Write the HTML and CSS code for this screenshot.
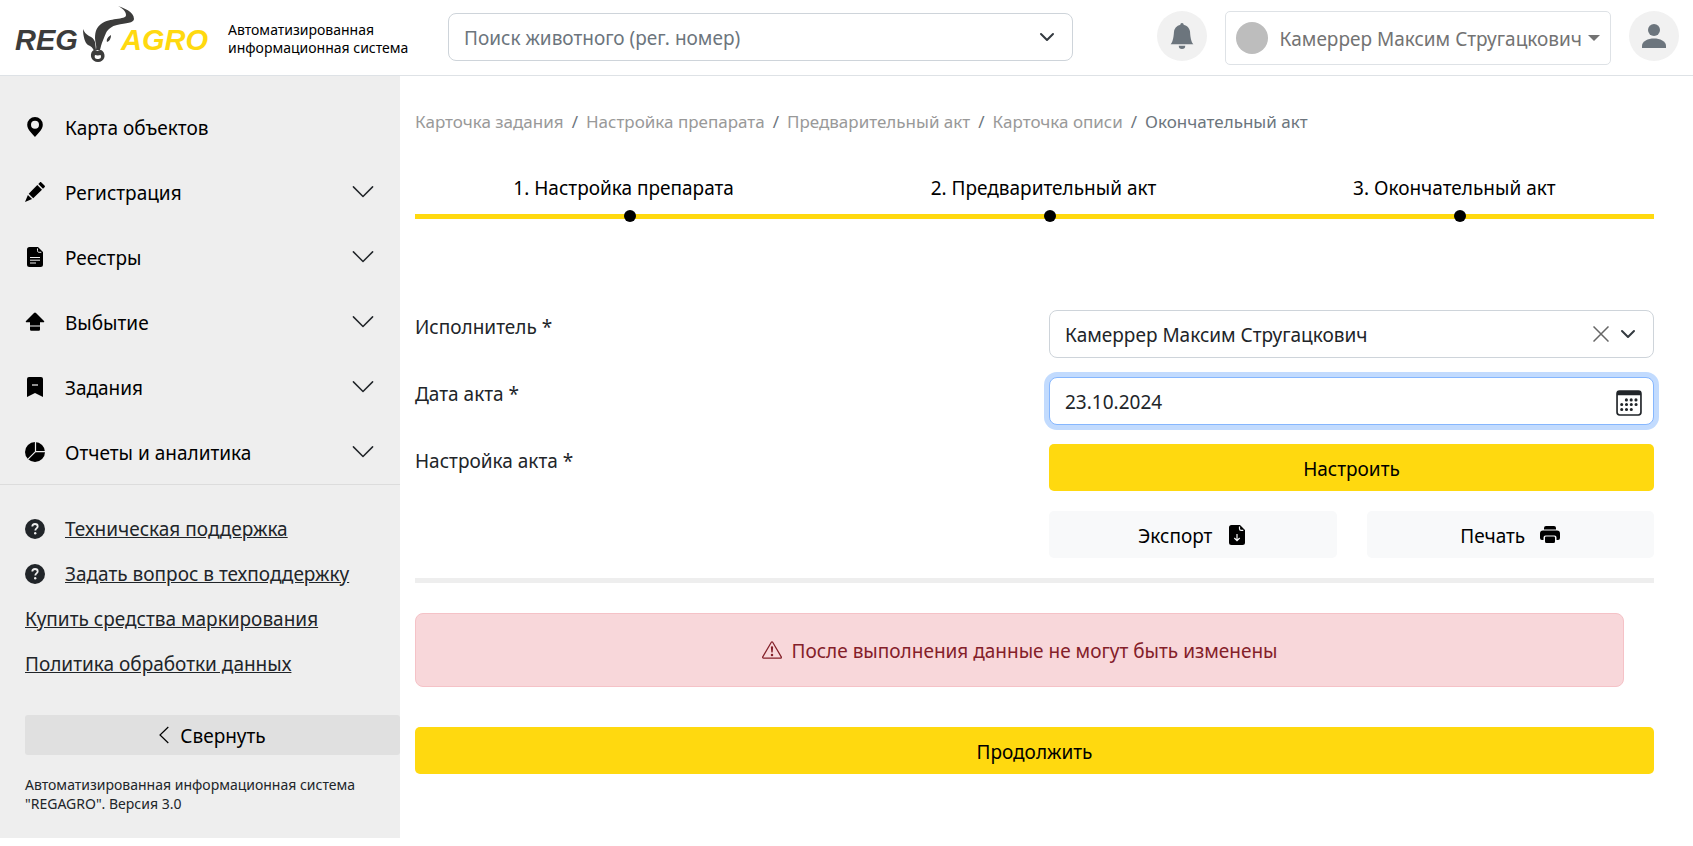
FILE: index.html
```html
<!DOCTYPE html>
<html lang="ru">
<head>
<meta charset="utf-8">
<title>REGAGRO</title>
<link rel="stylesheet" href="styles.css">
</head>
<body>
<svg class="sprite" aria-hidden="true">
  <symbol id="chevron" viewBox="0 0 16 16"><path d="M1.6 4.6 8 11l6.400-6.400" fill="none" stroke="currentColor" stroke-width="1" stroke-linecap="round" stroke-linejoin="round"/></symbol>
  <symbol id="chevron-bold" viewBox="0 0 16 16"><path d="m2 5 6 6 6-6" fill="none" stroke="#343a40" stroke-width="2" stroke-linecap="round" stroke-linejoin="round"/></symbol>
  <symbol id="question" viewBox="0 0 20 20"><circle cx="10" cy="10" r="10" fill="currentColor"/><path d="M7.300 7.600c0-1.700 1.200-2.600 2.700-2.600s2.700.9 2.700 2.400c0 2-2.400 2-2.400 4.100" fill="none" stroke="#eee" stroke-width="1.800"/><circle cx="10.200" cy="14.300" r="1.200" fill="#eee"/></symbol>
</svg>

<header class="header">
  <a class="brand" href="#" aria-label="REGAGRO">
    <svg class="logo" viewBox="0 0 196 70">
      <text class="logo-text" x="0" y="50" fill="#3c3c3b">REG</text>
      <text class="logo-text" x="106" y="50" fill="#ffd90f">AGRO</text>
      <g transform="translate(-15 0)" fill="#3c3c3b">
        <path d="M118 6c5 2 16 5 16 13 0 4-8 4-17 6-5 1-9 4-11 8-2 5-4 9-5 13l-1 4h-4c1-4-1-8-1-12 0-7 2-11 6-14 5-4 10-4 15-5 6-1 10-1 10-4 0-4-4-7-8-9z"/>
        <path d="M83 29c1 3 3 5 6 7 3 1 5 3 6 6l1 8-2 1c-1-3-3-5-6-6-3-2-5-9-5-16z"/>
        <path d="M111 35c0 3-1 6-4 7-1-3 1-5 4-7z"/>
        <path d="M92.500 51c1-1.500 3-1.500 5 0 2-1.500 4-1.500 5 0 4 4 2 11-4.500 11s-9-7-5.500-11zm2.500 4c-1 3 .5 4 2.800 4s4-1 2.800-4l-2.800.5z" fill-rule="evenodd"/>
      </g>
    </svg>
    <span class="tagline">Автоматизированная<br>информационная система</span>
  </a>
  <div class="field search">
    <select class="control control-muted" aria-label="Поиск животного"><option>Поиск животного (рег. номер)</option></select>
    <svg class="field-chevron"><use href="#chevron-bold"/></svg>
  </div>
  <div class="account">
    <button class="round" aria-label="Уведомления"><svg viewBox="0 0 16 16" width="26" height="26" fill="currentColor"><path d="M8 16a2 2 0 0 0 2-2H6a2 2 0 0 0 2 2m.995-14.901a1 1 0 1 0-1.990 0A5 5 0 0 0 3 6c0 1.098-.5 6-2 7h14c-1.500-1-2-5.902-2-7 0-2.420-1.720-4.440-4.005-4.901"/></svg></button>
    <button class="user"><span class="avatar"></span><span class="label">Камеррер Максим Стругацкович</span><span class="caret"></span></button>
    <button class="round" aria-label="Профиль"><svg viewBox="0 0 24 24" width="24" height="24" fill="currentColor"><circle cx="12" cy="6" r="6"/><path d="M0 24v-2c0-5 6-7.500 12-7.500S24 17 24 22v2z"/></svg></button>
  </div>
</header>

<div class="layout">
  <aside class="sidebar">
    <nav class="nav">
      <a class="nav-item" href="#"><svg class="icon" viewBox="0 0 20 20"><path fill-rule="evenodd" d="M10 0a7.800 7.800 0 0 1 7.800 7.800C17.800 13 12 17.500 10 20 8 17.500 2.200 13 2.200 7.800A7.800 7.800 0 0 1 10 0zm0 3.800a4 4 0 1 0 0 8 4 4 0 0 0 0-8z"/></svg><span class="label">Карта объектов</span></a>
      <a class="nav-item" href="#"><svg class="icon" viewBox="0 0 20 20"><path d="M14.800.5c.5-.6 1-.6 1.600 0l3.100 3.100c.6.6.6 1.100 0 1.600L18 6.700 13.300 2zM12.300 3 17 7.700 8.200 16.200 3.700 11.800zM2.900 13l4.200 4.100L0 20z"/></svg><span class="label">Регистрация</span><svg class="nav-chevron"><use href="#chevron"/></svg></a>
      <a class="nav-item" href="#"><svg class="icon" viewBox="0 0 20 20"><path d="M4.500 0H13l5 5v12.500a2.500 2.500 0 0 1-2.500 2.500h-11A2.500 2.500 0 0 1 2 17.500v-15A2.500 2.500 0 0 1 4.500 0z"/><path d="M12.500 1.500v2.200c0 1 .5 1.600 1.600 1.600h2.200M5 10.500h10M5 13.200h10M5 16h6" fill="none" stroke="#eee" stroke-width="1"/></svg><span class="label">Реестры</span><svg class="nav-chevron"><use href="#chevron"/></svg></a>
      <a class="nav-item" href="#"><svg class="icon" viewBox="0 0 20 20"><path d="M9 .9c.7-.7 1.300-.7 2 0l8 8c.5.6.2 1.300-.6 1.300H15v3.200H5v-3.200H1.600c-.8 0-1.100-.7-.6-1.300zM5 14.600h10v3a1.200 1.200 0 0 1-1.200 1.200H6.200A1.200 1.200 0 0 1 5 17.600z"/></svg><span class="label">Выбытие</span><svg class="nav-chevron"><use href="#chevron"/></svg></a>
      <a class="nav-item" href="#"><svg class="icon" viewBox="0 0 20 20"><path d="M4 0h12a2 2 0 0 1 2 2v18l-8-4-8 4V2a2 2 0 0 1 2-2z"/><path d="M7 8h6" stroke="#eee" stroke-width="1.200"/></svg><span class="label">Задания</span><svg class="nav-chevron"><use href="#chevron"/></svg></a>
      <a class="nav-item" href="#"><svg class="icon" viewBox="0 0 20 20"><circle cx="10" cy="10" r="10"/><path d="M10.500 0v9.700H20M10.500 9.700 3 17.200" fill="none" stroke="#eee" stroke-width="1.200"/></svg><span class="label">Отчеты и аналитика</span><svg class="nav-chevron"><use href="#chevron"/></svg></a>
    </nav>
    <div class="links">
      <a class="link" href="#"><svg class="icon"><use href="#question"/></svg><span>Техническая поддержка</span></a>
      <a class="link" href="#"><svg class="icon"><use href="#question"/></svg><span>Задать вопрос в техподдержку</span></a>
      <a class="link" href="#"><span>Купить средства маркирования</span></a>
      <a class="link" href="#"><span>Политика обработки данных</span></a>
    </div>
    <button class="collapse"><svg viewBox="0 0 10 18" width="10" height="18"><path d="M9.300 1 1 9l8.300 8" fill="none" stroke="currentColor" stroke-width="1.200"/></svg><span class="label">Свернуть</span></button>
    <p class="version">Автоматизированная информационная система "REGAGRO". Версия 3.0</p>
  </aside>

  <main class="main">
    <nav class="breadcrumb">
      <a href="#">Карточка задания</a><a href="#">Настройка препарата</a><a href="#">Предварительный акт</a><a href="#">Карточка описи</a><span>Окончательный акт</span>
    </nav>
    <ol class="steps">
      <li>1. Настройка препарата</li>
      <li>2. Предварительный акт</li>
      <li>3. Окончательный акт</li>
    </ol>
    <form class="form">
      <label class="form-label" for="executor">Исполнитель *</label>
      <div class="field">
        <select class="control" id="executor"><option>Камеррер Максим Стругацкович</option></select>
        <button type="button" class="clear" aria-label="Очистить"><svg viewBox="0 0 16 16" width="16" height="16"><path d="m.5.5 15 15m0-15-15 15" stroke="currentColor" stroke-width="1.500"/></svg></button>
        <svg class="field-chevron"><use href="#chevron-bold"/></svg>
      </div>
      <label class="form-label" for="date">Дата акта *</label>
      <div class="field">
        <input class="control control-active" id="date" type="text" value="23.10.2024">
        <svg class="calendar" viewBox="0 0 25 25"><rect x="1" y="1" width="23" height="23" rx="2.500" fill="none" stroke="#212529" stroke-width="1.600"/><path d="M1 5V3a2 2 0 0 1 2-2h19a2 2 0 0 1 2 2v2z" fill="#212529"/><path d="M10 9.500h9.500M5.500 14h14M5.500 18.700h9.500" stroke="#212529" stroke-width="3" stroke-linecap="round" stroke-dasharray="0 4.600"/></svg>
      </div>
      <label class="form-label" for="setup">Настройка акта *</label>
      <button type="button" class="button" id="setup"><span class="label">Настроить</span></button>
      <div class="pair">
        <button type="button" class="button button-light"><span class="label">Экспорт</span><svg class="icon" viewBox="0 0 20 20"><path d="M4.500 0H13l5 5v12.500a2.500 2.500 0 0 1-2.500 2.500h-11A2.500 2.500 0 0 1 2 17.500v-15A2.500 2.500 0 0 1 4.500 0z"/><path d="M12.500 1.500v2.200c0 1 .5 1.600 1.600 1.600h2.200M10 9v6.500M7.300 13l2.700 2.700 2.700-2.700" fill="none" stroke="#f8f9fa" stroke-width="1.200"/></svg></button>
        <button type="button" class="button button-light"><span class="label">Печать</span><svg class="icon" viewBox="0 0 20 20"><path d="M6 1h8a2 2 0 0 1 2 2v1.500H4V3a2 2 0 0 1 2-2zM3 5.600h14a3 3 0 0 1 3 3V13a2 2 0 0 1-2 2h-1.500v-2.500a2 2 0 0 0-2-2h-9a2 2 0 0 0-2 2V15H2a2 2 0 0 1-2-2V8.600a3 3 0 0 1 3-3zM6.300 11.500h7.400c.8 0 1.300.5 1.300 1.300v3.700a1.500 1.500 0 0 1-1.500 1.500h-7A1.500 1.500 0 0 1 5 16.500v-3.700c0-.8.500-1.300 1.300-1.300z"/></svg></button>
      </div>
    </form>
    <hr class="rule">
    <div class="alert" role="alert"><svg viewBox="0 0 16 16" width="20" height="20" fill="currentColor"><path d="M7.938 2.016A.13.13 0 0 1 8.002 2a.13.13 0 0 1 .063.016.15.15 0 0 1 .054.057l6.857 11.667c.036.060.035.124.002.183a.2.2 0 0 1-.054.060.1.1 0 0 1-.066.017H1.146a.1.1 0 0 1-.066-.017.2.2 0 0 1-.054-.060.180.180 0 0 1 .002-.183L7.884 2.073a.15.15 0 0 1 .054-.057m1.044-.450a1.130 1.130 0 0 0-1.960 0L.165 13.233c-.457.778.091 1.767.980 1.767h13.713c.889 0 1.438-.990.980-1.767z"/><path d="M7.002 12a1 1 0 1 1 2 0 1 1 0 0 1-2 0M7.100 5.995a.905.905 0 1 1 1.800 0l-.350 3.507a.552.552 0 0 1-1.100 0z"/></svg><span class="label">После выполнения данные не могут быть изменены</span></div>
    <button class="button"><span class="label">Продолжить</span></button>
  </main>
</div>
</body>
</html>
```

FILE: styles.css
```css
* { box-sizing: border-box; }
body {
  margin: 0;
  background: #fff;
  color: #212529;
  font: 19px/30px "Noto Sans", "Open Sans", sans-serif;
}
button, input, select { font: inherit; color: inherit; margin: 0; }
button { cursor: pointer; }
svg { flex: none; }
.sprite { display: none; }
.icon { width: 20px; height: 20px; }
.label { padding-top: 2px; }

.header {
  display: flex;
  align-items: flex-start;
  height: 76px;
  padding-right: 14px;
  border-bottom: 1px solid #dee2e6;
}
.brand {
  display: flex;
  align-items: flex-start;
  gap: 17px;
  width: 448px;
  padding-left: 15px;
  color: #000;
  text-decoration: none;
}
.logo { width: 196px; height: 70px; }
.logo-text { font: italic bold 29px "Liberation Sans", Arial, sans-serif; }
.tagline { padding-top: 21px; font-size: 14px; line-height: 18px; white-space: nowrap; }
.search { flex: 1; max-width: 625px; margin-top: 13px; }
.account { display: flex; gap: 18px; margin: 11px 0 0 auto; }
.round {
  display: flex;
  align-items: center;
  justify-content: center;
  width: 50px;
  height: 50px;
  padding: 0;
  border: 0;
  border-radius: 50%;
  background: #f1f1f1;
  color: #6c757d;
}
.user {
  display: flex;
  align-items: center;
  gap: 12px;
  height: 54px;
  padding: 0 10px;
  border: 1px solid #dee2e6;
  border-radius: 5px;
  background: #fff;
  color: #737373;
  white-space: nowrap;
}
.avatar { width: 32px; height: 32px; border-radius: 50%; background: #bdbdbd; }
.caret { margin-left: -6px; border: 6px solid transparent; border-top-color: #737373; border-bottom: 0; }

.field { position: relative; }
.control {
  display: block;
  width: 100%;
  height: 48px;
  padding: 2px 15px 0;
  border: 1px solid #ced4da;
  border-radius: 8px;
  outline: 0;
  background: #fff;
  appearance: none;
}
.control-muted { color: #6c757d; }
.control-active { border-color: #86b7fe; box-shadow: 0 0 0 5px #c2dbfe; }
.field-chevron { position: absolute; top: 16px; right: 18px; width: 16px; height: 16px; pointer-events: none; }
.clear {
  position: absolute;
  top: 16px;
  right: 45px;
  display: flex;
  padding: 0;
  border: 0;
  background: none;
  color: #666;
}
.calendar { position: absolute; top: 13px; right: 12px; width: 26px; height: 26px; pointer-events: none; }

.layout { display: flex; align-items: flex-start; }
.sidebar { flex: none; width: 400px; padding-bottom: 25px; background: #eee; }
.nav { padding: 18px 25px 0; border-bottom: 1px solid #dcdcdc; }
.nav-item {
  display: flex;
  align-items: center;
  gap: 20px;
  height: 65px;
  color: #000;
  text-decoration: none;
}
.nav-chevron { width: 24px; height: 24px; margin-left: auto; color: #212529; }
.links { padding: 21px 25px 0; }
.link { display: flex; align-items: center; gap: 20px; height: 45px; color: #212529; }
.collapse {
  display: flex;
  align-items: center;
  justify-content: center;
  gap: 11px;
  width: 375px;
  height: 40px;
  margin: 29px 0 20px 25px;
  border: 0;
  border-radius: 3px;
  background: #e0e0e0;
  color: #000;
}
.version { margin: 0; padding: 0 25px; font-size: 14px; line-height: 19px; }

.main { flex: 1; min-width: 0; padding: 31px 39px 0 15px; }
.breadcrumb { display: flex; font-size: 17px; }
.breadcrumb a { color: #999; text-decoration: none; }
.breadcrumb a::after { content: "/"; margin: 0 8px; color: #6c757d; }
.breadcrumb span { color: #6c757d; }
.steps {
  display: flex;
  justify-content: space-around;
  margin: 36px 0 91px;
  padding: 0;
  border-bottom: 5px solid #ffd90f;
  color: #000;
  list-style: none;
}
.steps li { position: relative; height: 41px; }
.steps li::after {
  content: "";
  position: absolute;
  bottom: -8px;
  left: 50%;
  width: 12px;
  height: 12px;
  border-radius: 50%;
  background: #000;
}
.form { display: grid; grid-template-columns: 1fr 1fr; grid-auto-rows: 47px; gap: 20px 29px; }
.form-label { padding-top: 2px; }
.pair { grid-column: 2; display: grid; grid-template-columns: 1fr 1fr; gap: 30px; }
.button {
  display: flex;
  align-items: center;
  justify-content: center;
  gap: 15px;
  width: 100%;
  height: 47px;
  padding: 0;
  border: 0;
  border-radius: 5px;
  background: #ffd90f;
  color: #000;
}
.button-light { background: #f8f9fa; }
.rule { height: 5px; margin: 20px 0 30px; border: 0; background: #eee; }
.alert {
  display: flex;
  align-items: center;
  justify-content: center;
  gap: 10px;
  height: 74px;
  margin: 0 30px 40px 0;
  border: 1px solid #f5c2c7;
  border-radius: 8px;
  background: #f8d7da;
  color: #842029;
}
```
